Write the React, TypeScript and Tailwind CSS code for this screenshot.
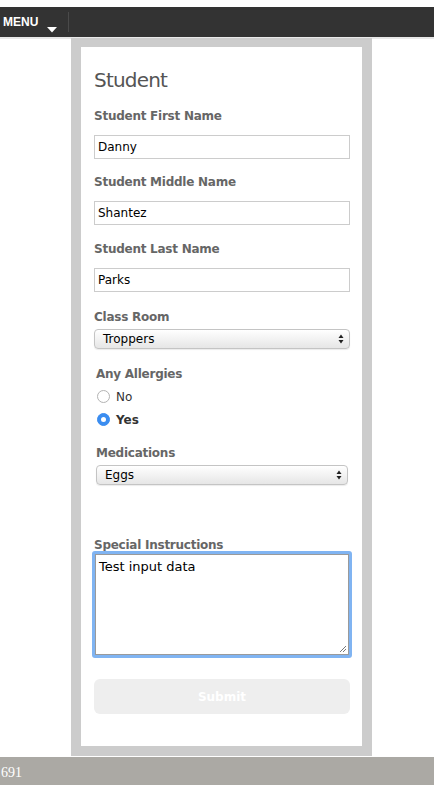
import { useState } from "react";

const body = "font-['DejaVu_Sans',_'Noto_Sans',_sans-serif]";

function Label({ children, className = "" }: { children: React.ReactNode; className?: string }) {
  return (
    <div
      className={`text-[12px] leading-[16px] font-bold text-[#666] tracking-[-0.25px] ${className}`}
    >
      {children}
    </div>
  );
}

function TextField({ value }: { value: string }) {
  return (
    <div className="h-[24px] border border-[#cccccc] bg-white px-[3px] flex items-center text-[12px] text-black">
      {value}
    </div>
  );
}

function SelectBox({ value, className = "" }: { value: string; className?: string }) {
  return (
    <div
      className={`h-[20px] rounded-[4px] border border-[#c4c4c4] bg-gradient-to-b from-white to-[#e6e6e6] flex items-center justify-between pl-[8px] pr-[5px] text-[12px] text-black shadow-[0_1px_1px_rgba(0,0,0,0.08)] ${className}`}
    >
      <span>{value}</span>
      <svg width="6" height="10" viewBox="0 0 6 10">
        <path d="M3 0.5 L5.5 4 L0.5 4 Z" fill="#222" />
        <path d="M3 9.5 L5.5 6 L0.5 6 Z" fill="#222" />
      </svg>
    </div>
  );
}

export default function App() {
  const [allergy, setAllergy] = useState("yes");

  return (
    <div className={`w-[434px] h-[785px] bg-white flex flex-col overflow-hidden ${body}`}>
      <div className="h-[7px] shrink-0" />

      {/* top bar */}
      <div className="h-[30px] shrink-0 bg-[#333333] flex items-stretch">
        <div className="flex items-start pl-[3px] pt-[8px] font-['Liberation_Sans',_Arial,_sans-serif] text-[12px] font-bold text-white leading-[14px]">
          MENU
        </div>
        <div className="flex items-end pl-[9px] pb-[4px]">
          <svg width="10" height="6" viewBox="0 0 10 6">
            <path d="M0 0 L10 0 L5 5.5 Z" fill="#fff" />
          </svg>
        </div>
        <div className="ml-[11px] my-[5px] w-px bg-[#4a4a4a]" />
      </div>
      <div className="h-[2px] shrink-0 bg-[#e8e8e8]" />

      {/* form area */}
      <div className="flex-1 min-h-0">
        <div className="ml-[71px] w-[301px] h-full bg-[#cccccc] px-[10px] pt-[9px] pb-[10px] -mt-[1px]">
          <div className="bg-white h-full pt-[21px] pl-[13px] pr-[12px]">
            <h1 className="text-[20px] leading-[24px] text-[#555] tracking-[-0.8px]">Student</h1>

            <Label className="mt-[16px]">Student First Name</Label>
            <div className="mt-[11px]">
              <TextField value="Danny" />
            </div>

            <Label className="mt-[15px]">Student Middle Name</Label>
            <div className="mt-[11px]">
              <TextField value="Shantez" />
            </div>

            <Label className="mt-[16px]">Student Last Name</Label>
            <div className="mt-[11px]">
              <TextField value="Parks" />
            </div>

            <Label className="mt-[17px]">Class Room</Label>
            <SelectBox value="Troppers" className="mt-[4px]" />

            <Label className="mt-[17px] ml-[2px]">Any Allergies</Label>
            <div className="ml-[3px] mt-[8px] flex flex-col gap-[10px] text-[12px] text-[#333]">
              <label className="flex items-center gap-[6px] h-[13px]" onClick={() => setAllergy("no")}>
                <span
                  className={`w-[13px] h-[13px] rounded-full border flex items-center justify-center ${
                    allergy === "no" ? "bg-[#3b8df0] border-[#3b8df0]" : "bg-white border-[#b3b3b3]"
                  }`}
                >
                  {allergy === "no" && <span className="w-[5px] h-[5px] rounded-full bg-white" />}
                </span>
                <span className={allergy === "no" ? "font-bold" : ""}>No</span>
              </label>
              <label className="flex items-center gap-[6px] h-[13px]" onClick={() => setAllergy("yes")}>
                <span
                  className={`w-[13px] h-[13px] rounded-full border flex items-center justify-center ${
                    allergy === "yes" ? "bg-[#3b8df0] border-[#3b8df0]" : "bg-white border-[#b3b3b3]"
                  }`}
                >
                  {allergy === "yes" && <span className="w-[5px] h-[5px] rounded-full bg-white" />}
                </span>
                <span className={allergy === "yes" ? "font-bold" : ""}>Yes</span>
              </label>
            </div>

            <Label className="mt-[19px] ml-[2px]">Medications</Label>
            <SelectBox value="Eggs" className="mt-[4px] mx-[2px]" />

            <Label className="mt-[52px]">Special Instructions</Label>
            <div className="-mx-[2px] -mt-[2px] h-[107px] rounded-[3px] border-[3px] border-[#80b4f2] relative">
              <div className="h-full border border-[#9a9a9a] bg-white px-[3px] pt-[4px] text-[13px] leading-[16px] text-black">
                Test input data
              </div>
              <svg className="absolute right-[2px] bottom-[2px]" width="8" height="8" viewBox="0 0 8 8">
                <path d="M7 1 L1 7 M7 4 L4 7" stroke="#555" strokeWidth="0.8" />
              </svg>
            </div>

            <button className="mt-[21px] w-full h-[35px] rounded-[6px] bg-[#eeeeee] text-white text-[12px] font-bold">
              Submit
            </button>
          </div>
        </div>
      </div>

      {/* footer */}
      <div className="h-[28px] shrink-0 bg-[#aba9a4] flex items-center">
        <span className="ml-[1px] mt-[2px] font-['Liberation_Serif',_serif] text-[14px] text-white">691</span>
      </div>
    </div>
  );
}
